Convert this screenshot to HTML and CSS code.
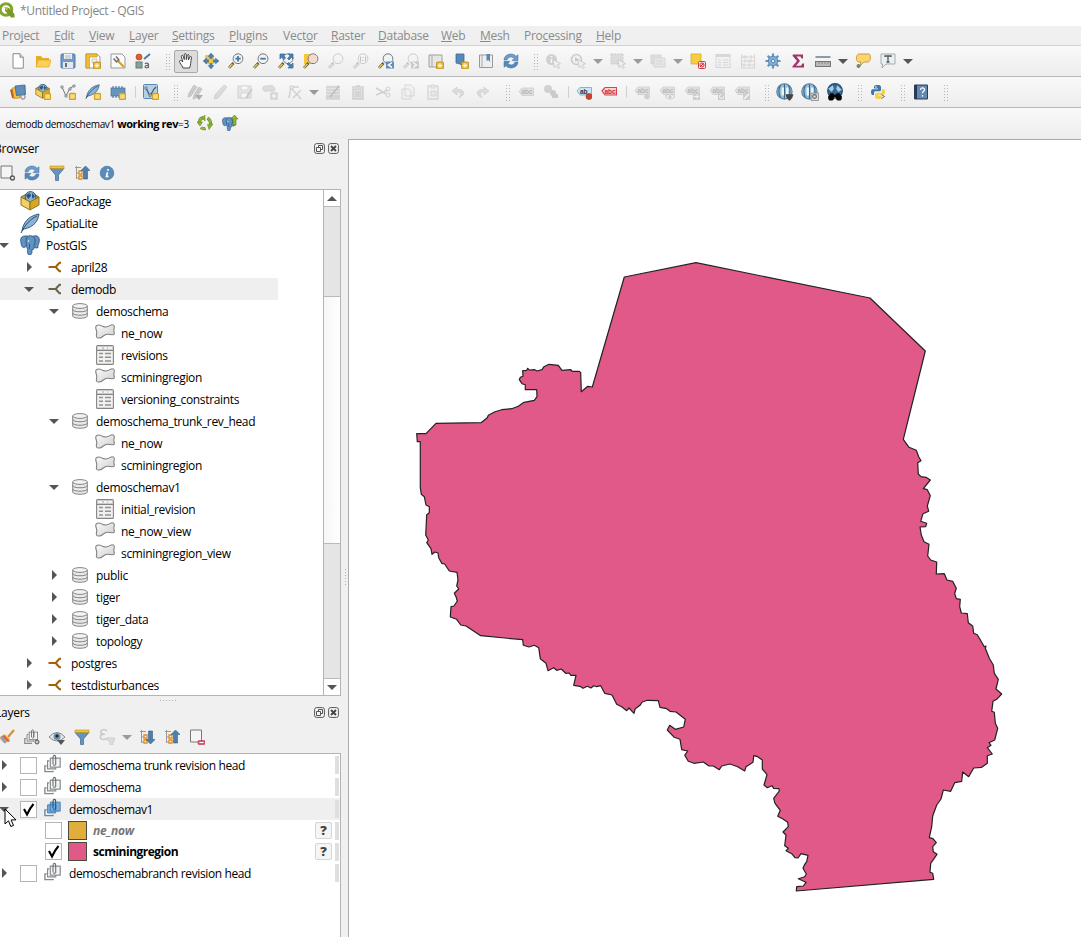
FILE: index.html
```html
<!DOCTYPE html>
<html lang="en">
<head>
<meta charset="utf-8">
<title>*Untitled Project - QGIS</title>
<link rel="stylesheet" href="styles.css">
</head>
<body>
<svg class="defs" aria-hidden="true">
<defs>
<linearGradient id="gr" x1="0" y1="0" x2="1" y2="1"><stop offset="0" stop-color="#fafafa"/><stop offset="1" stop-color="#cfcfcf"/></linearGradient>
<symbol id="badge" viewBox="0 0 16 16"><rect x="9.500" y="9.500" width="6" height="6" rx="1" fill="#f7dc7a" stroke="#d3a021" stroke-width="1.300"/></symbol>
<symbol id="new" viewBox="0 0 16 16"><path d="M3 .7h7l3.300 3.500v11H3z" fill="#fff" stroke="#8b8b8b"/><path d="M10 .7v3.500h3.300" fill="#ddd" stroke="#8b8b8b"/></symbol>
<symbol id="open" viewBox="0 0 16 16"><path d="M1 3h5l1.500 2H14v9H1z" fill="#e7ae27"/><path d="M3 7h13l-2 7H1z" fill="#fcd059" stroke="#dca82c" stroke-width=".7"/></symbol>
<symbol id="save" viewBox="0 0 16 16"><rect x="1" y="1" width="14" height="14" rx="1" fill="#6f9bcb" stroke="#4f7baa"/><path d="M4 1h8v5H4z" fill="#eef2f5"/><path d="M5 3h6M5 5h6" stroke="#aaa" stroke-width=".8"/><path d="M3 9h10v6H3z" fill="#e4e7e9"/><rect x="5" y="10" width="2" height="4" fill="#60707d"/></symbol>
<symbol id="star" viewBox="0 0 16 16"><rect x="8.500" y="9" width="7" height="7" rx="1" fill="#e4b62f" stroke="#ad8517" stroke-width=".7"/><path d="M12 10v5M9.500 12.500h5M10.200 10.700l3.600 3.600M13.800 10.700l-3.600 3.600" stroke="#fff" stroke-width=".8"/></symbol>
<symbol id="layout" viewBox="0 0 16 16"><path d="M1 1h11l3 3v11H1z" fill="#fff" stroke="#999"/><path d="M1 1h11v3H4.500v11H1z" fill="#f1bd36" stroke="#c4962b" stroke-width=".7"/><path d="M7 6h5v4H7z" fill="#f4f4f4" stroke="#aaa" stroke-width=".6"/><use href="#star"/></symbol>
<symbol id="manager" viewBox="0 0 16 16"><path d="M1 1h11l3 3v11H1z" fill="#fafafa" stroke="#999"/><path d="M8 8l6 6" stroke="#d1a22e" stroke-width="2.200"/><path d="M3.500 5.500l3 3.300 2.300-2L6 3.500" fill="none" stroke="#777" stroke-width="1.700"/></symbol>
<symbol id="style" viewBox="0 0 16 16"><circle cx="4" cy="4" r="3" fill="#e0602d" stroke="#a8441c" stroke-width=".7"/><path d="M15 1L9 6" stroke="#4d7ca8" stroke-width="2"/><rect x="1" y="9" width="6" height="6" fill="#85a398" stroke="#5f7c72"/><path d="M10 11c1-1.500 3.500-1 3.500 1v3M13.500 12.500c-5-.5-4 3.500-.5 2" fill="none" stroke="#666" stroke-width="1.200"/></symbol>
<symbol id="hand" viewBox="0 0 16 16"><path d="M5 15c-1-3-3.500-5-3.500-6.500S3.600 7 4.800 9L3.300 3.500c0-1.500 1.500-1.500 2 0l1 3V1.600c0-1.400 1.900-1.400 2 0v5l1-4.300c.5-1.300 2-.8 1.700.6L10.400 7l1.500-3c.7-1 2-.4 1.600.8C12.500 9 13 12 11.500 15z" fill="#fff" stroke="#333" stroke-width=".9"/></symbol>
<symbol id="panto" viewBox="0 0 16 16"><rect x="2" y="2" width="9" height="9" fill="#f5c93d"/><g fill="#4f7fac" stroke="#35618c" stroke-width=".4"><path d="M8 0l3 3.600H9.200v2H6.800v-2H5z"/><path d="M8 16l3-3.600H9.200v-2H6.800v2H5z"/><path d="M0 8l3.600-3v1.800h2v2.400h-2V11z"/><path d="M16 8l-3.600-3v1.800h-2v2.400h2V11z"/></g></symbol>
<symbol id="glass" viewBox="0 0 16 16"><path d="M5.500 10L1 14.800" stroke="#555" stroke-width="2.600"/><path d="M4.500 11L1 14.800" stroke="#e7c83b" stroke-width="1.500"/><circle cx="10" cy="5.700" r="4.900" fill="#eef2f4" fill-opacity=".8" stroke="#777"/></symbol>
<symbol id="zin" viewBox="0 0 16 16"><use href="#glass"/><path d="M10 3v5.400M7.300 5.700h5.400" stroke="#4878a8" stroke-width="1.800"/></symbol>
<symbol id="zout" viewBox="0 0 16 16"><use href="#glass"/><path d="M7.300 5.700h5.400" stroke="#4878a8" stroke-width="1.800"/></symbol>
<symbol id="zfull" viewBox="0 0 16 16"><use href="#glass"/><path d="M2 1h5L5.700 2.500 7.500 5 6 6.500 3.500 4 2 6zM15 1v5l-1.700-1.600L11 7 9.500 5.400 12 3l-1.500-2zM15 15h-5l1.500-1.700L9 11l1.500-1.500L13 12l2-2z" fill="#4f7fac" stroke="#3f6f9c" stroke-width=".8"/></symbol>
<symbol id="zsel" viewBox="0 0 16 16"><rect x="1" y="1" width="9" height="10" fill="#f6c73c"/><use href="#glass"/><circle cx="10" cy="5.700" r="4" fill="#f5d9c8"/></symbol>
<symbol id="znat" viewBox="0 0 16 16"><use href="#glass"/><path d="M7.500 3.500v5M12.500 3.500v5M10 4v1M10 7v1" stroke="#555"/></symbol>
<symbol id="zlast" viewBox="0 0 16 16"><use href="#glass"/><rect x="8" y="8.500" width="8" height="7" fill="#608db9"/><path d="M14 9.500L10.500 12l3.500 2.300" fill="none" stroke="#fff" stroke-width="1.500"/></symbol>
<symbol id="znext" viewBox="0 0 16 16"><use href="#glass"/><rect x="8" y="8.500" width="8" height="7" fill="#777"/><path d="M10 9.500l3.500 2.500-3.500 2.300" fill="none" stroke="#fff" stroke-width="1.500"/></symbol>
<symbol id="mapview" viewBox="0 0 16 16"><path d="M1 2h13v12H1z" fill="#e6e6e3" stroke="#a0a09d"/><path d="M4 2v12" stroke="#aaa"/><use href="#star"/></symbol>
<symbol id="bookmark" viewBox="0 0 16 16"><path d="M3 1h8v13l-4-3-4-1z" fill="#5988b5" stroke="#3c6b99" stroke-width=".8"/><use href="#star"/></symbol>
<symbol id="bookmarks" viewBox="0 0 16 16"><path d="M1.500 2h13v12.500h-13z" fill="#eee" stroke="#999"/><path d="M4 2v12" stroke="#aaa"/><path d="M8.500 1h3.500v8l-1.700-2L8.500 8z" fill="#5988b5"/></symbol>
<symbol id="refresh" viewBox="0 0 16 16"><path d="M1 7c0-6 9-8 12-3.700l2-1.600v6H9l2-2.200C8.500 3 5 4 4 7z" fill="#6b9ccb" stroke="#3f709f" stroke-width=".5"/><path d="M15 9c0 6-9 8-12 3.700l-2 1.600v-6h6l-2 2.200c2.500 2.500 6 1.500 7-1.500z" fill="#5488b8" stroke="#3f709f" stroke-width=".5"/></symbol>
<symbol id="info" viewBox="0 0 16 16"><circle cx="8" cy="8" r="6.800" fill="#5b8bb9" stroke="#44749f" stroke-width=".7"/><path d="M9 4v1.700M8.500 7.200L7.500 11.500h2" fill="none" stroke="#fff" stroke-width="1.700"/></symbol>
<symbol id="cursorpart" viewBox="0 0 16 16"><path d="M8 6.500l7.500 4.200-3 .8 2 3-1.700 1-2-3-1.800 2z" fill="#eee" stroke="#666" stroke-width=".8"/></symbol>
<symbol id="identify" viewBox="0 0 16 16"><circle cx="6.500" cy="6.500" r="5.500" fill="#888"/><path d="M6.500 3v1.500M6.500 6v4" stroke="#fff" stroke-width="1.700"/><use href="#cursorpart"/></symbol>
<symbol id="action" viewBox="0 0 16 16"><circle cx="6.500" cy="6.500" r="5" fill="#eee" stroke="#777" stroke-width="1.600"/><path d="M5 4l4 2.500L5 9z" fill="#777"/><use href="#cursorpart"/></symbol>
<symbol id="select" viewBox="0 0 16 16"><rect x="1" y="1" width="12" height="10" fill="#aaa" stroke="#777" stroke-dasharray="2 1"/><use href="#cursorpart"/></symbol>
<symbol id="forms" viewBox="0 0 16 16"><path d="M1 2h10v9H1z" fill="#aaa" stroke="#999"/><path d="M4 5h11v9H4z" fill="#ccc" stroke="#999"/><path d="M6 8h7M6 11h7" stroke="#999"/></symbol>
<symbol id="deselect" viewBox="0 0 16 16"><path d="M1 1h10v10H1z" fill="#f6cf3f" stroke="#d3a52a" stroke-width=".7"/><rect x="8.500" y="8.500" width="7" height="7" rx="1" fill="#f9dddd" stroke="#cf3c46"/><circle cx="12" cy="12" r="2" fill="none" stroke="#cf3c46"/><path d="M10 14l4-4" stroke="#cf3c46"/></symbol>
<symbol id="tbl" viewBox="0 0 16 16"><rect x="1" y="1.500" width="14" height="13" fill="#eee" stroke="#999"/><path d="M1 3h14" stroke="#999" stroke-width="2"/><path d="M3 7h3M3 9.500h3M3 12h3M8 7h5M8 9.500h5M8 12h5" stroke="#999" stroke-width="1.200"/></symbol>
<symbol id="abacus" viewBox="0 0 16 16"><path d="M1.500 1v14M14.500 1v14M1 4h14M1 8h14M1 12h14M1 15h14" stroke="#999"/><path d="M4 2.500v3M6 2.500v3M11 2.500v3M5 6.500v3M9 6.500v3M11 6.500v3M4 10.500v3M9 10.500v3" stroke="#999" stroke-width="1.500"/></symbol>
<symbol id="gear" viewBox="0 0 16 16"><path d="M8 .5v15M.5 8h15M2.700 2.700l10.600 10.600M13.300 2.700L2.700 13.300" stroke="#5f92c3" stroke-width="2.200"/><circle cx="8" cy="8" r="4.800" fill="#83add4" stroke="#5989b8"/><circle cx="8" cy="8" r="1.700" fill="#eee" stroke="#5989b8"/></symbol>
<symbol id="sum" viewBox="0 0 16 16"><path d="M3 1.500h10v4h-1.500L10.500 3.500H6.500L10 8l-4 4.700h5l1.500-2.200H14v4H2.500v-1.300L7 8 2.500 2.700z" fill="#a33267"/></symbol>
<symbol id="ruler" viewBox="0 0 16 16"><path d="M.5 4h15" stroke="#667f94" stroke-width="1.500"/><rect x=".5" y="8.500" width="15" height="5" fill="#bbb" stroke="#777"/><path d="M4 9v2M7 9v2M10 9v2M13 9v2" stroke="#777" stroke-width=".7"/></symbol>
<symbol id="tip" viewBox="0 0 16 16"><path d="M4 1h10c2 0 2 8-1 8H9l-4 4 1-4H4C0 9 1 1 4 1z" fill="#fbd670" stroke="#d09a38"/><circle cx="3.500" cy="13" r="2" fill="#747f76"/></symbol>
<symbol id="note" viewBox="0 0 16 16"><path d="M1 1h14v10H6l-4 4 .5-4H1z" fill="#eaf0f2" stroke="#a4acae"/><path d="M5 4V3h6v1M8 3v6M6.500 9h3" fill="none" stroke="#555" stroke-width="1.300"/></symbol>
<symbol id="dsm" viewBox="0 0 16 16"><path d="M.5 6l7-2v9l-5 1z" fill="#d94c30" stroke="#9b3622" stroke-width=".6"/><path d="M2 4l7-1 1 11-6 .5z" fill="#f4bd39" stroke="#af8220" stroke-width=".6"/><path d="M5 2l10-1 .5 9.500-9 1z" fill="#5e8eba" stroke="#376691" stroke-width=".8"/><circle cx="13" cy="13" r="2.200" fill="#eee" stroke="#777"/></symbol>
<symbol id="geopkg" viewBox="0 0 20 20"><path d="M1 6l9-5 9 5-9 4.500z" fill="#bfae62" stroke="#7e6b2d"/><circle cx="10.500" cy="6" r="5.400" fill="#8fb1cc" stroke="#2e587f"/><path d="M6 4l4-2 1 3-3 3zM12 2l3 3-2 3-1-2z" fill="#2c537a"/><path d="M1 6l9 5v8l-9-5z" fill="#f3d15c" stroke="#8d7328"/><path d="M19 6l-9 5v8l9-5z" fill="#d8a920" stroke="#8d7328"/></symbol>
<symbol id="gpnew" viewBox="0 0 16 16"><use href="#geopkg" width="15" height="15"/><use href="#badge"/></symbol>
<symbol id="shpnew" viewBox="0 0 16 16"><path d="M2 3l4 9 4-8 4-2" fill="none" stroke="#6f7474"/><path d="M1 2h2v2H1zM5 11h2v2H5zM9 4h2v2H9zM13 1h2v2h-2z" fill="#fff" stroke="#65757c" stroke-width=".8"/><use href="#badge"/></symbol>
<symbol id="feather" viewBox="0 0 20 20"><path d="M2 18C3 10 8 3 19 1c-1 7-5 13-15 15z" fill="#8db2d7" stroke="#375c7c"/><path d="M1 20C5 12 9 7 17 3" fill="none" stroke="#254c70"/></symbol>
<symbol id="splnew" viewBox="0 0 16 16"><use href="#feather" width="15" height="15"/><use href="#badge"/></symbol>
<symbol id="memnew" viewBox="0 0 16 16"><path d="M3 2v12M6 2v12M9 2v12M12 2v12" stroke="#5580a8" stroke-width="1.200"/><rect x="1" y="4" width="14" height="8" fill="#6794bf" stroke="#426e99" stroke-width=".7"/><use href="#badge"/></symbol>
<symbol id="virtual" viewBox="0 0 16 16"><rect x=".5" y=".5" width="14" height="14" rx="1" fill="#b4cfe6" stroke="#5688b4"/><path d="M3 4l4 8 4-7 2-2" fill="none" stroke="#3e5669" stroke-width="1.200"/><path d="M2 3h2v2H2zM6 10h2v2H6z" fill="#fff" stroke="#3e5669" stroke-width=".7"/><use href="#badge"/></symbol>
<symbol id="pencil" viewBox="0 0 16 16"><path d="M12 1l3 2-9 11-4 1 1-4z" fill="#aaa" stroke="#888"/></symbol>
<symbol id="pencils" viewBox="0 0 16 16"><path d="M7 1l3 2-6 9-3 1 1-4zM12 3l3 2-6 9-3 1 1-4z" fill="#777" stroke="#666"/><path d="M8 11h8l-4 5z" fill="#222"/></symbol>
<symbol id="savee" viewBox="0 0 16 16"><path d="M1 2h13v12H1z" fill="#ccc" stroke="#888"/><path d="M4 2h7v4H4zM4 9h7v5H4z" fill="#fff" stroke="#999"/><path d="M15 5l-6 9" stroke="#777" stroke-width="2"/></symbol>
<symbol id="poly" viewBox="0 0 16 16"><path d="M2 2c4 1 6-2 9 0 4 3 1 7-2 5-3-1-5 1-7 0-2-2-1-4 0-5z" fill="#aaa" stroke="#888"/><rect x="9" y="9" width="6" height="6" fill="#bbb" stroke="#777"/><path d="M12 10v4M10 12h4" stroke="#fff"/></symbol>
<symbol id="vertex" viewBox="0 0 16 16"><path d="M2 14L4 3h8M5 5l9 10M14 6L6 14" fill="none" stroke="#888" stroke-width="1.400"/><path d="M3 2h3v3H3z" stroke="#777" fill="#fff"/></symbol>
<symbol id="multi" viewBox="0 0 16 16"><path d="M1 3h14M1 6h14M1 9h14M1 12h14M1 14.500h14" stroke="#999" stroke-width="2.300"/><path d="M14 2L5 13" stroke="#555" stroke-width="1.700"/></symbol>
<symbol id="trash" viewBox="0 0 16 16"><path d="M2 3h12M6 2h4M3 5h10v10H3z" fill="#bbb" stroke="#888" stroke-width="1.500"/><path d="M6 7v6M8 7v6M10 7v6" stroke="#777"/></symbol>
<symbol id="cut" viewBox="0 0 16 16"><path d="M1 4l10 6M1 11l12-5" stroke="#888" stroke-width="1.500"/><circle cx="13" cy="11" r="2" fill="none" stroke="#888"/><circle cx="13" cy="5" r="2" fill="none" stroke="#888"/></symbol>
<symbol id="copy" viewBox="0 0 16 16"><path d="M5 1h6l3 3v8H5zM2 5h7l2 2v8H2z" fill="#eee" stroke="#999"/></symbol>
<symbol id="paste" viewBox="0 0 16 16"><path d="M3 2h10v13H3z" fill="#eee" stroke="#999" stroke-width="1.400"/><path d="M6 1h4v3H6zM6 7h5v5H6z" fill="#ccc" stroke="#999"/></symbol>
<symbol id="undo" viewBox="0 0 16 16"><path d="M7 3L2 7l5 4V8.500c3-1.500 5 1 2 5 7-2 6-9-2-8z" fill="#aaa" stroke="#888" stroke-width=".8"/></symbol>
<symbol id="abc" viewBox="0 0 16 16"><path d="M1 7.500L4 4h11.500v7.500H4z" fill="#bbb" stroke="#888" stroke-width=".9"/><text x="3.500" y="10" font-family="Liberation Sans" font-size="6.500" font-weight="bold" fill="#333">abc</text></symbol>
<symbol id="abcblue" viewBox="0 0 16 16"><path d="M1 7L4 3.500h11.500V11H4z" fill="#c9e7f8" stroke="#66b2df" stroke-width=".9"/><text x="4" y="9.500" font-family="Liberation Sans" font-size="6.500" font-weight="bold" fill="#333">ab</text><circle cx="13" cy="12.500" r="3" fill="#c8442d" stroke="#9a3021" stroke-width=".6"/></symbol>
<symbol id="abcred" viewBox="0 0 16 16"><path d="M1 7L4 3.500h11.500V11H4z" fill="#fad5dc" stroke="#dc4058" stroke-width="1.200"/><text x="3.500" y="9.500" font-family="Liberation Sans" font-size="6.500" font-weight="bold" fill="#b92540">abc</text></symbol>
<symbol id="abcpin" viewBox="0 0 16 16"><use href="#abc" y="-1"/><circle cx="13" cy="12.500" r="2.800" fill="#888"/></symbol>
<symbol id="abceye" viewBox="0 0 16 16"><use href="#abc" y="-1"/><path d="M6 12.500q5-5 10 0-5 5-10 0z" fill="#eee" stroke="#777"/><circle cx="11" cy="12.500" r="1.500" fill="#777"/></symbol>
<symbol id="abcmove" viewBox="0 0 16 16"><use href="#abc" y="-1"/><rect x="9" y="9" width="7" height="7" fill="#888"/><path d="M10 12.500h4M12.500 10.500l2 2-2 2" stroke="#fff" fill="none"/></symbol>
<symbol id="abcrot" viewBox="0 0 16 16"><use href="#abc" y="-1"/><rect x="9" y="9" width="7" height="7" fill="#888"/><circle cx="12.500" cy="12.500" r="2" stroke="#fff" fill="none" stroke-dasharray="8 3"/></symbol>
<symbol id="abcedit" viewBox="0 0 16 16"><use href="#abc" y="-1"/><rect x="9" y="9" width="7" height="7" fill="#888"/><path d="M10 15l5-5" stroke="#fff" stroke-width="1.500"/></symbol>
<symbol id="diag" viewBox="0 0 16 16"><circle cx="5" cy="5" r="4" fill="#888"/><path d="M9 7v7h6v-4h-3V7z" fill="#777"/><circle cx="10" cy="9" r="3" fill="#777"/></symbol>
<symbol id="globe" viewBox="0 0 16 16"><circle cx="7.500" cy="7.500" r="6.800" fill="#93bddc" stroke="#597f9c"/><path d="M4 2q-3 5 0 11M11 2q3 5 0 11M7.500 1v13" stroke="#3f6788" fill="none"/><path d="M5 4h2v7H5zM9 4h2v6H9z" fill="#f2f7f9"/></symbol>
<symbol id="globe1" viewBox="0 0 16 16"><use href="#globe"/><path d="M8.500 10h7l-1 3-2 2.500h-1l-2-2.500z" fill="#444"/></symbol>
<symbol id="globe2" viewBox="0 0 16 16"><use href="#globe"/><rect x="9" y="9" width="6.500" height="6.500" fill="#ddd" stroke="#888" stroke-width=".7"/><circle cx="12" cy="12" r="1.700" fill="none" stroke="#666"/></symbol>
<symbol id="globe3" viewBox="0 0 16 16"><circle cx="8" cy="7" r="6.500" fill="#356894" stroke="#254a69"/><path d="M2 5l4-3 1 3-2 3zM10 2l4 4-3 2-2-3z" fill="#a9cce5"/><path d="M4 9h2.500l1 1.500h1l1-1.500H12l2 3.500H2z" fill="#050505"/><circle cx="4.500" cy="13" r="2.600" fill="#050505"/><circle cx="11.500" cy="13" r="2.600" fill="#050505"/></symbol>
<symbol id="python" viewBox="0 0 16 16"><path d="M7.500 1C4 1 4 2 4 4.500h4v.8H2.500C.5 5.300.5 11 2.500 11H4V8.800c0-1 .8-1.500 1.600-1.500h4C10.500 7.300 11 6.500 11 6V3c0-1.500-1.200-2-3.500-2z" fill="#3e76aa"/><path d="M8.500 15c3.500 0 3.500-1 3.500-3.500H8v-.8h5.500c2 0 2-5.700 0-5.700H12v2.200c0 1-.8 1.500-1.600 1.500h-4C5.500 8.700 5 9.500 5 10v3c0 1.500 1.200 2 3.500 2z" fill="#f8d245"/><path d="M11.500 10.500l3 2-3 2" fill="none" stroke="#666"/><circle cx="6" cy="3" r=".8" fill="#fff"/></symbol>
<symbol id="help" viewBox="0 0 16 16"><path d="M1.500 1h13v14h-13z" fill="#6389b3" stroke="#2a3f59"/><path d="M2 1h2v14H2z" fill="#263a53"/><path d="M7.500 6c0-3 4-2.500 4-.3 0 1.700-2 1.500-2 3.500M9.500 11v1.500" stroke="#fff" stroke-width="1.300" fill="none"/></symbol>
<symbol id="recycle" viewBox="0 0 16 16"><g fill="none" stroke="#5a7d1c" stroke-width="3"><path d="M6 2.500Q2 4 2.500 8M4 12.500q2 2 4.500 1M13.500 9.500q.5-4-3-6.500"/></g><g fill="none" stroke="#94b738" stroke-width="2"><path d="M6 2.500Q2 4 2.500 8M4 12.500q2 2 4.500 1M13.500 9.500q.5-4-3-6.500"/></g><path d="M0 7h5.500L3 11zM8 0v6L5 3zM10.500 9.500l5.500-.5-4 5.500z" fill="#8cb233" stroke="#5a7d1c" stroke-width=".5"/></symbol>
<symbol id="elephant" viewBox="0 0 20 20"><path d="M5 1C1 1 0 4 1 8c.5 3 1.500 5 3 4.500l2-1c1 1 1.500 2 1.500 4 0 3 .5 4.500 2 4.500 2.500 0 2.500-2 2.500-5.500 2 .5 2-1 2-2l3 .5c1-.5 2-1 .5-1.500C20 7 20 2 17 1c-2-.6-3 0-4 .3C11 .5 9 .7 8 1.200 7 1 6 .8 5 1z" fill="#5f93c4" stroke="#274d72" stroke-width=".8"/><path d="M8 1.500C5.500 3 6 7 6.500 11M13 1.500c2.500 2 3 6 .5 10M9.500 9v5" fill="none" stroke="#274d72" stroke-width=".8"/><circle cx="8.500" cy="6" r=".8" fill="#fff"/></symbol>
<symbol id="elup" viewBox="0 0 16 16"><use href="#elephant" y="2" width="14" height="14"/><path d="M12.500 0L16 4h-2v6h-3V4H9z" fill="#91b731" stroke="#557b18" stroke-width=".6"/></symbol>
<symbol id="addlayer" viewBox="0 0 16 16"><path d="M2 1h11v12H2z" fill="#f5f5f5" stroke="#777"/><circle cx="13.500" cy="13" r="2" fill="#eee" stroke="#555" stroke-width="1.300"/></symbol>
<symbol id="filter" viewBox="0 0 16 16"><path d="M1 3.500h14L9.500 10v5.500H6.500V10z" fill="#6592be" stroke="#3f6c98" stroke-width=".7"/><path d="M1 1h14v2.500H1z" fill="#f2c338" stroke="#b99224" stroke-width=".6"/></symbol>
<symbol id="collapse" viewBox="0 0 16 16"><path d="M1 2.500h6M2.500 1v13M3 8h4M3 13h5" stroke="#999" fill="none"/><path d="M5 6h3v3H5zM5 11h3v3H5z" fill="#fff" stroke="#e08b22" stroke-width="1.300"/><path d="M11.500 1l4.500 4.500h-2.500V14h-4V5.500H7z" fill="#4e7eab" stroke="#315f8a" stroke-width=".6"/></symbol>
<symbol id="expand" viewBox="0 0 16 16"><path d="M1 2.500h6M2.500 1v13M3 8h4M3 13h5" stroke="#999" fill="none"/><path d="M5 6h3v3H5zM5 11h3v3H5z" fill="#fff" stroke="#e08b22" stroke-width="1.300"/><path d="M11.500 15l4.500-4.500h-2.500V2h-4v8.500H7z" fill="#4e7eab" stroke="#315f8a" stroke-width=".6"/></symbol>
<symbol id="brush" viewBox="0 0 16 16"><path d="M15 1L9 8" stroke="#d2913b" stroke-width="2.200"/><path d="M0 9l6-4 5 5-5 5z" fill="#f5bd49"/><path d="M5 6l6 6-2 1-6-6z" fill="#e05451"/><path d="M1 8l2-1 5 6-3 1z" fill="#77a4ce"/></symbol>
<symbol id="layergroup" viewBox="0 0 20 20"><path d="M3 12H1v6.500h9v-1" fill="none" stroke="#838a89" stroke-width="1.500"/><path d="M6 6.500H4v9h9v-2" fill="none" stroke="#838a89" stroke-width="1.300"/><rect x="7" y="3.500" width="11" height="10" fill="#f4f4f2" stroke="#838a89" stroke-width="1.300"/><path d="M13 4v6.500M10 10V3c0-3.500 3-3.500 3 0v7.500q-1.500 2-3 0" fill="none" stroke="#5f7182" stroke-width="1.200"/></symbol>
<symbol id="activegroup" viewBox="0 0 20 20"><path d="M3 12H1v6.500h9v-1" fill="none" stroke="#628baf" stroke-width="1.500"/><path d="M4 6.500h9v9H4zM7 3.500h11v10H7z" fill="#73aee0" stroke="#447ba9"/><path d="M10 10V3c0-3.500 3-3.500 3 0v7.500q-1.500 2-3 0" fill="none" stroke="#28577d" stroke-width="1.200"/></symbol>
<symbol id="addgroup" viewBox="0 0 16 16"><use href="#layergroup" width="15" height="16"/><circle cx="13" cy="13" r="2" fill="#ccc" stroke="#555"/></symbol>
<symbol id="eye" viewBox="0 0 16 16"><path d="M0 8q8-9 16 0-8 8-16 0z" fill="#dfe9ef" stroke="#888"/><circle cx="8" cy="7.500" r="3.500" fill="#6f8fae"/><circle cx="8" cy="7" r="1.500" fill="#222"/><path d="M8 11h8l-4 5z" fill="#555"/></symbol>
<symbol id="eps" viewBox="0 0 16 16"><path d="M8 2C5-1 1 1 2 4c.3 1 2 1.300 4 1.300C2 5.300 1 6.500 1.500 9c1 2 5 2 7 0" fill="none" stroke="#777" stroke-width="1.600"/><path d="M8 9h8v2l-2 1v4h-3v-4l-3-1z" fill="#bbb" stroke="#888"/></symbol>
<symbol id="remove" viewBox="0 0 16 16"><path d="M1.500 1h11v12h-11z" fill="#f5f5f5" stroke="#777"/><rect x="9" y="11.500" width="7" height="4" rx="1" fill="#e25375" stroke="#bd3455" stroke-width=".6"/><path d="M10.500 13.500h4" stroke="#fff"/></symbol>
<symbol id="conn" viewBox="0 0 14 12"><path d="M.5 6H8M13 1.800h-1.500L8.500 5v2l3 3.200H13" fill="none" stroke="currentColor" stroke-width="2"/></symbol>
<symbol id="schema" viewBox="0 0 16 16"><path d="M.7 3v10c0 3 14.600 3 14.600 0V3" fill="#e9e9e7" stroke="#858585"/><ellipse cx="8" cy="3" rx="7.300" ry="2.400" fill="#f3f3f2" stroke="#858585"/><path d="M.7 6.500c0 3 14.600 3 14.600 0M.7 10c0 3 14.600 3 14.600 0" fill="none" stroke="#858585"/></symbol>
<symbol id="region" viewBox="0 0 20 15"><path d="M1 5C0 2 2 .6 5 1.200c3 .8 4 2.300 7 1.600 3-.7 3-2 5.500-2 2 0 2 2 1.500 4-.5 1.500.3 3 .3 5 0 1.200-2 1.200-4 .7-3-.7-5-.5-7 1.500-2 1.800-4 2.500-6 1.700C.7 13 1.500 11 1.700 9.500 1.900 8 1.500 6.500 1 5z" fill="url(#gr)" stroke="#828282" stroke-width="1.100"/></symbol>
<symbol id="sheet" viewBox="0 0 18 20"><rect x=".6" y=".6" width="16.800" height="18.800" rx="1" fill="#f0f0ee" stroke="#858585" stroke-width="1.100"/><path d="M1 1h16v4H1z" fill="#ccc"/><path d="M1 5.500h16" stroke="#858585"/><path d="M2 3h4M8 3h3M12 3h4" stroke="#fff" stroke-width="1.500"/><path d="M3 8.500h4M3 12.200h4M3 16h4M9 8.500h6M9 12.200h6M9 16h6" stroke="#929292" stroke-width="1.500"/></symbol>
<symbol id="check" viewBox="0 0 15 15"><path d="M3 7l3 5.500Q9 6 12.500 2" fill="none" stroke="#000" stroke-width="2.100"/></symbol>
<symbol id="float" viewBox="0 0 11 11"><rect x=".6" y=".6" width="9.800" height="9.800" rx="2" fill="#f6f6f6" stroke="#555"/><path d="M4.500 4V2.500h4v4H7M2.500 4.500h4v4h-4z" fill="none" stroke="#555"/></symbol>
<symbol id="close" viewBox="0 0 11 11"><rect x=".6" y=".6" width="9.800" height="9.800" rx="2" fill="#f6f6f6" stroke="#555"/><path d="M3 3l5 5M8 3L3 8" stroke="#444" stroke-width="1.900"/></symbol>
</defs>
</svg>

<div class="app">
<header class="titlebar">
<svg class="logo" viewBox="0 0 16 16"><circle cx="7" cy="7.500" r="5.800" fill="#fff" stroke="#83a62f" stroke-width="3"/><path d="M6 6h4l5.500 6v3.500H12L6 9z" fill="#779b2b"/><path d="M5 5h4L8 9z" fill="#eeb544"/></svg>
<span class="title">*Untitled Project - QGIS</span>
</header>
<nav class="menubar">
<span class="m52">Pro<u>j</u>ect</span><span class="m35"><u>E</u>dit</span><span class="m40"><u>V</u>iew</span><span class="m43"><u>L</u>ayer</span><span class="m57"><u>S</u>ettings</span><span class="m54"><u>P</u>lugins</span><span class="m48">Vect<u>o</u>r</span><span class="m47"><u>R</u>aster</span><span class="m63"><u>D</u>atabase</span><span class="m39"><u>W</u>eb</span><span class="m44"><u>M</u>esh</span><span class="m72">Pro<u>c</u>essing</span><span><u>H</u>elp</span>
</nav>

<div class="toolbar">
<b class="grip edge"></b>
<i><svg><use href="#new"/></svg></i><i><svg><use href="#open"/></svg></i><i><svg><use href="#save"/></svg></i><i><svg><use href="#layout"/></svg></i><i><svg><use href="#manager"/></svg></i><i><svg><use href="#style"/></svg></i>
<b class="grip"></b>
<i class="pressed"><svg><use href="#hand"/></svg></i><i><svg><use href="#panto"/></svg></i><i><svg><use href="#zin"/></svg></i><i><svg><use href="#zout"/></svg></i><i><svg><use href="#zfull"/></svg></i><i><svg><use href="#zsel"/></svg></i><i class="off"><svg><use href="#glass"/></svg></i><i class="off"><svg><use href="#znat"/></svg></i><i><svg><use href="#zlast"/></svg></i><i class="off"><svg><use href="#znext"/></svg></i><i><svg><use href="#mapview"/></svg></i><i><svg><use href="#bookmark"/></svg></i><i><svg><use href="#bookmarks"/></svg></i><i><svg><use href="#refresh"/></svg></i>
<b class="grip narrow"></b>
<i class="off"><svg><use href="#identify"/></svg></i><i class="off"><svg><use href="#action"/></svg></i><b class="drop dim"></b><i class="off"><svg><use href="#select"/></svg></i><b class="drop dim"></b><i class="off"><svg><use href="#forms"/></svg></i><b class="drop dim"></b><i><svg><use href="#deselect"/></svg></i><i class="off"><svg><use href="#tbl"/></svg></i><i class="off"><svg><use href="#abacus"/></svg></i><i><svg><use href="#gear"/></svg></i><i><svg><use href="#sum"/></svg></i><i><svg><use href="#ruler"/></svg></i><b class="drop"></b><i><svg><use href="#tip"/></svg></i><i><svg><use href="#note"/></svg></i><b class="drop"></b>
</div>

<div class="toolbar">
<b class="grip edge"></b>
<i><svg><use href="#dsm"/></svg></i><i><svg><use href="#gpnew"/></svg></i><i><svg><use href="#shpnew"/></svg></i><i><svg><use href="#splnew"/></svg></i><i><svg><use href="#memnew"/></svg></i><b class="sep"></b><i><svg><use href="#virtual"/></svg></i>
<b class="grip wide"></b>
<i class="off"><svg><use href="#pencils"/></svg></i><i class="off"><svg><use href="#pencil"/></svg></i><i class="off"><svg><use href="#savee"/></svg></i><i class="off"><svg><use href="#poly"/></svg></i><i class="off"><svg><use href="#vertex"/></svg></i><b class="drop tight dim"></b><i class="off"><svg><use href="#multi"/></svg></i><i class="off"><svg><use href="#trash"/></svg></i><i class="off"><svg><use href="#cut"/></svg></i><i class="off"><svg><use href="#copy"/></svg></i><i class="off"><svg><use href="#paste"/></svg></i><i class="off"><svg><use href="#undo"/></svg></i><i class="off flip"><svg><use href="#undo"/></svg></i>
<b class="grip"></b>
<i class="off"><svg><use href="#abc"/></svg></i><i class="off"><svg><use href="#diag"/></svg></i><b class="sep"></b><i><svg><use href="#abcblue"/></svg></i><i><svg><use href="#abcred"/></svg></i><b class="sep"></b><i class="off"><svg><use href="#abcpin"/></svg></i><i class="off"><svg><use href="#abceye"/></svg></i><i class="off"><svg><use href="#abcmove"/></svg></i><i class="off"><svg><use href="#abcrot"/></svg></i><i class="off"><svg><use href="#abcedit"/></svg></i>
<b class="grip"></b>
<i><svg class="big"><use href="#globe1"/></svg></i><i><svg class="big"><use href="#globe2"/></svg></i><i><svg class="big"><use href="#globe3"/></svg></i>
<b class="grip"></b>
<i><svg><use href="#python"/></svg></i>
<b class="grip"></b>
<i><svg><use href="#help"/></svg></i>
<b class="grip"></b>
</div>

<div class="toolbar versioning">
<b class="grip edge"></b>
<span class="vtext">demodb demoschemav1 <strong>working rev</strong>=3</span>
<i><svg><use href="#recycle"/></svg></i><i><svg><use href="#elup"/></svg></i>
</div>

<main class="work">
<aside class="docks">
<section class="dock browser">
<div class="dockhead"><span class="browser-title">Browser</span><svg><use href="#float"/></svg><svg><use href="#close"/></svg></div>
<div class="docktools"><i><svg><use href="#addlayer"/></svg></i><i><svg><use href="#refresh"/></svg></i><i><svg><use href="#filter"/></svg></i><i><svg><use href="#collapse"/></svg></i><i><svg><use href="#info"/></svg></i></div>
<div class="treebox">
<div class="tree">
<div class="row l0"><b></b><i><svg class="s20"><use href="#geopkg"/></svg></i><span>GeoPackage</span></div>
<div class="row l0"><b></b><i><svg class="s20"><use href="#feather"/></svg></i><span>SpatiaLite</span></div>
<div class="row l0"><b class="down"></b><i><svg class="s20"><use href="#elephant"/></svg></i><span>PostGIS</span></div>
<div class="row l1"><b class="right"></b><i class="orange"><svg class="conn"><use href="#conn"/></svg></i><span>april28</span></div>
<div class="row l1 current"><b class="down"></b><i class="olive"><svg class="conn"><use href="#conn"/></svg></i><span>demodb</span></div>
<div class="row l2"><b class="down"></b><i><svg><use href="#schema"/></svg></i><span>demoschema</span></div>
<div class="row l3"><b></b><i><svg class="region"><use href="#region"/></svg></i><span>ne_now</span></div>
<div class="row l3"><b></b><i><svg class="sheet"><use href="#sheet"/></svg></i><span>revisions</span></div>
<div class="row l3"><b></b><i><svg class="region"><use href="#region"/></svg></i><span>scminingregion</span></div>
<div class="row l3"><b></b><i><svg class="sheet"><use href="#sheet"/></svg></i><span>versioning_constraints</span></div>
<div class="row l2"><b class="down"></b><i><svg><use href="#schema"/></svg></i><span>demoschema_trunk_rev_head</span></div>
<div class="row l3"><b></b><i><svg class="region"><use href="#region"/></svg></i><span>ne_now</span></div>
<div class="row l3"><b></b><i><svg class="region"><use href="#region"/></svg></i><span>scminingregion</span></div>
<div class="row l2"><b class="down"></b><i><svg><use href="#schema"/></svg></i><span>demoschemav1</span></div>
<div class="row l3"><b></b><i><svg class="sheet"><use href="#sheet"/></svg></i><span>initial_revision</span></div>
<div class="row l3"><b></b><i><svg class="region"><use href="#region"/></svg></i><span>ne_now_view</span></div>
<div class="row l3"><b></b><i><svg class="region"><use href="#region"/></svg></i><span>scminingregion_view</span></div>
<div class="row l2"><b class="right"></b><i><svg><use href="#schema"/></svg></i><span>public</span></div>
<div class="row l2"><b class="right"></b><i><svg><use href="#schema"/></svg></i><span>tiger</span></div>
<div class="row l2"><b class="right"></b><i><svg><use href="#schema"/></svg></i><span>tiger_data</span></div>
<div class="row l2"><b class="right"></b><i><svg><use href="#schema"/></svg></i><span>topology</span></div>
<div class="row l1"><b class="right"></b><i class="orange"><svg class="conn"><use href="#conn"/></svg></i><span>postgres</span></div>
<div class="row l1"><b class="right"></b><i class="orange"><svg class="conn"><use href="#conn"/></svg></i><span>testdisturbances</span></div>
</div>
<div class="scrollbar"><div class="sbtn"><b class="up"></b></div><div class="strack"></div><div class="sthumb"></div><div class="strack grow"></div><div class="sbtn"><b class="dn"></b></div></div>
</div>
</section>
<div class="hsplit"></div>
<section class="dock layers">
<div class="dockhead"><span class="layers-title">Layers</span><svg><use href="#float"/></svg><svg><use href="#close"/></svg></div>
<div class="docktools"><i><svg><use href="#brush"/></svg></i><i><svg><use href="#addgroup"/></svg></i><i><svg><use href="#eye"/></svg></i><i><svg><use href="#filter"/></svg></i><i class="off"><svg><use href="#eps"/></svg></i><b class="drop dim"></b><i><svg><use href="#expand"/></svg></i><i><svg><use href="#collapse"/></svg></i><i><svg><use href="#remove"/></svg></i></div>
<div class="layerlist">
<div class="lrow"><b class="right"></b><em></em><i><svg class="s18"><use href="#layergroup"/></svg></i><span>demoschema trunk revision head</span><s></s></div>
<div class="lrow"><b class="right"></b><em></em><i><svg class="s18"><use href="#layergroup"/></svg></i><span>demoschema</span><s></s></div>
<div class="lrow current"><b class="down"></b><em><svg><use href="#check"/></svg></em><i><svg class="s18"><use href="#activegroup"/></svg></i><span>demoschemav1</span><s></s></div>
<div class="lrow child"><em></em><i class="swatch gold"></i><span class="hiddenlayer">ne_now</span><q>?</q><s></s></div>
<div class="lrow child"><em><svg><use href="#check"/></svg></em><i class="swatch pink"></i><span class="shown">scminingregion</span><q>?</q><s></s></div>
<div class="lrow"><b class="right"></b><em></em><i><svg class="s18"><use href="#layergroup"/></svg></i><span>demoschemabranch revision head</span><s></s></div>
<svg class="cursor" viewBox="0 0 13 20"><path d="M1 1v15l3.500-3.200 2.300 5.700 2.700-1.100-2.400-5.500H12z" fill="#fff" stroke="#000"/></svg>
</div>
</section>
</aside>
<div class="vsplit"><b></b></div>
<section class="canvas">
<svg class="map" viewBox="349 140 732 797"><path d="M416.700 433.700H426L436 423.300 481 422.700 487.300 417.700 488.300 415.300 495 411.700 501.700 409.700 511.700 408.700 518.300 406.300 524 402.300 534.300 400.300 537 396.700 536.700 389.700H525.300V384.700L522 383.700 519.300 379.700 520.300 377.300 523 376.300 522.700 370.700 526.700 370.300 527.700 368.300 529.300 370 534.700 369.700 537 371 542 369.700 544 366.700 549 364.300 558.300 365.300 562 370.300 571 369.700 572 371.300H579.300L580.700 372.700 581.300 391.700 587.700 386.300 592.300 387 624.300 277 696 262.700 870 298 925.300 351 903.300 439.300
909 447.300 916.300 450.300 918.700 456.700 921 460.700 917.700 462.700 918.300 474 921 476.700 926 477.300 930.300 480 923.300 488.700 927.300 489.700 930.300 495.700 927.300 506 928.700 511.300 923 513.700 920.700 521.300 926.700 523.300 925.700 526.700 920 527 921.300 535 924 541.700 929 544.300 927.700 556 930.700 560 936.700 562 936.300 574 944.300 573.700 947 580 952.700 581.300 956.300 588.300 954.700 593.300 956.300 598.700 960.300 599.300 959.700 606.700 961.300 613 967.300 613.700 968.300 622.700 972.700 626 973.700 633.300 977.300 634.700 984.300 646.700 986 646 985.300 648.300 989.300 658.300 993.300 665 994.300 673.300 998.300 679.300 996 689
1001.700 694 996.700 699.300 993 701.300 991.700 711.300 994.300 712.300 995.300 723.300 997.700 728.300 994.700 740 989 742.700 991 745.300 987.300 747.700 992.300 754 987.300 755.700V763.300L981.700 767.300 973.700 768 968.700 776.700 962.700 772 961.700 781.300 954.700 782.700 950.700 791.300 943.300 790 941 799 936.700 805 932.700 816 931.700 826.700 929.300 837.700 933 838.700 936.300 842.700 932.700 846.700 933.300 851.700 937 854.300 930.700 863.300 930 872.300 932.700 873.300 933.700 879.300 796.300 891 796.700 886.700 803.300 886 806 882.300 798.300 878.700 804.700 876.700 806.300 874 803 868.300 804.700 864.300 806.700 861.700 808 855.300 801 853.700 798 858 795 857.700 791.700 853.700 786 850.700 788.300 848.300 784.700 845.700 786 835 783 832 788.300 826.700 787.700 822.300 783 819 777.700 816.300 780.300 810.300 775 803.300 773.700 798.300 779.300 791 779 788.700 773.700 788.300 772 785.700 767.300 787.700 764 785 767 774.700 762.300 769V760L757.700 756.700 753.700 755.700 753 762.300 746 766.700 744.700 771 737.700 766.700 730 764 721.700 766 719.300 769.700 713.300 766H709L703.300 762 694 763.300 688.300 761.300 684.700 755.300 687.700 751 681.700 749.700
680 739.300 674.300 737.300 667.300 730 669.700 725.300 675.300 729.300 683.700 727 685.300 719.300 676 712 670 711.300 666.700 708.700 660 707.300 658.300 700.700 647.300 700.300 642.300 702 640 705.300 635.300 708.700 634 713.300 629 708 626.700 710.700 621.700 706.700 616.700 704.300 612 695 604.700 693.300 600.700 685.700 596.700 686.700 593.700 685.700 591 688 587.300 686.300 583 688.300 580 686.300 573.700 685.300 576 675.300H570.700L569.300 673 565.700 673.300 561.300 669 556.700 670.300 553.700 667.700 548 670.700 546 663.300 540.300 658.700 538.700 647.700 534.300 645.300 529 647 523.300 645.300 522.700 639.700 480.700 635.700 466 626 460.700 625 456.700 619.300 450.300 617 451 606.700 454 606 457.300 601 456 596.700 454.300 593.300 458.700 589 456.700 586 458 580 457 572.300 449.300 571 444.700 564 441.700 563.300 438.700 557.700 438 553 435 552 432 554.300 431 548.700 426.700 542.700 428.300 540 425.700 535 426.700 514.700 429.300 512.700V506.700L426 505 424.300 496.700 421.300 494.300 420.300 487.700V441.700H417.300Z"/></svg>
</section>
</main>
</div>
</body>
</html>
```

FILE: styles.css
```css
* { box-sizing: border-box; }
body { margin: 0; font-family: "Open Sans", "Noto Sans", sans-serif; font-size: 12px; color: #000; background: #f0f0f0; }
.defs { position: absolute; width: 0; height: 0; }
.app { display: flex; flex-direction: column; width: 1081px; height: 937px; overflow: hidden; }
i, em, s, q { font-style: normal; }
s { text-decoration: none; }
q::before, q::after { content: none; }
svg { display: block; width: 16px; height: 16px; flex: none; }
span { white-space: nowrap; letter-spacing: -0.25px; }

.titlebar { height: 26px; flex: none; display: flex; align-items: center; background: #fff; padding-bottom: 6px; color: #858585; }
.logo { margin-left: -1px; }
.title { margin-left: 5px; letter-spacing: -0.32px; }
.menubar { height: 20px; flex: none; display: flex; align-items: center; padding-left: 2px; background: #f0f0f0; border-bottom: 1px solid #d2d2d2; color: #8a8a8a; }
.menubar u { text-decoration: underline 1px; text-underline-offset: 1px; text-decoration-skip-ink: none; }
.m52 { width: 52px; } .m35 { width: 35px; } .m40 { width: 40px; } .m43 { width: 43px; }
.m57 { width: 57px; } .m54 { width: 54px; } .m48 { width: 48px; } .m47 { width: 47px; }
.m63 { width: 63px; } .m39 { width: 39px; } .m44 { width: 44px; } .m72 { width: 72px; }

.toolbar { height: 31px; flex: none; display: flex; align-items: center; background: linear-gradient(#f9f9f9, #ededed); border-bottom: 1px solid #b7b7b7; }
.toolbar i, .docktools i { width: 25px; height: 25px; flex: none; display: flex; align-items: center; justify-content: center; }
.toolbar .big { width: 18px; height: 18px; }
.toolbar .pressed { width: 24px; margin-right: 1px; height: 23px; border: 1px solid #a9a9a9; border-radius: 2px; background: #dcdcdc; }
.off svg { opacity: .32; filter: grayscale(1); }
.flip svg { transform: scaleX(-1); }
.grip { width: 18px; height: 17px; flex: none; background: radial-gradient(circle, #b4b4b4 .7px, transparent .9px) 0 0 / 3px 3px; background-clip: content-box; padding: 0 4px 0 9px; }
.grip.edge { width: 5px; padding: 0 4px 0 0; margin-right: .5px; }
.grip.narrow { width: 17px; padding-right: 3px; }
.grip.wide { width: 19px; padding-right: 5px; }
.sep { width: 8px; height: 12px; flex: none; border-left: 1px solid #cfcfcf; margin-left: 4px; margin-right: -4px; }
.drop { width: 15px; height: 15px; flex: none; display: flex; align-items: center; justify-content: center; }
.drop.tight { width: 14px; margin-left: -1px; }
.drop::before { content: ""; border: 5px solid transparent; border-top-color: #555; border-bottom: 0; }
.drop.dim::before { border-top-color: #9a9a9a; }
.versioning { border-bottom: 0; padding-bottom: 1px; }
.vtext { width: 187px; font-size: 10px; letter-spacing: -0.33px; }
.vtext strong { font-size: 11px; letter-spacing: -0.42px; }

.work { flex: 1; display: flex; min-height: 0; }
.docks { width: 341px; flex: none; display: flex; flex-direction: column; overflow: hidden; }
.dockhead { height: 20px; display: flex; align-items: center; gap: 3px; padding-right: 2px; padding-bottom: 2px; }
.dockhead span { flex: 1; }
.dockhead svg { width: 11px; height: 11px; }
.browser-title { margin-left: -6px; }
.layers-title { margin-left: -5px; }
.docktools { display: flex; align-items: center; margin-left: -5.5px; padding-bottom: 2px; }
.browser { height: 557px; flex: none; display: flex; flex-direction: column; }
.browser .docktools { height: 30px; }
.treebox { flex: 1; display: flex; min-height: 0; background: #fff; border: 1px solid #b4b4b4; border-left: 0; }
.tree { flex: 1; overflow: hidden; }
.tree span { letter-spacing: -0.33px; }
.row { height: 22px; display: flex; align-items: center; width: 278px; }
.current { background: #efefef; }
.row > b { width: 18px; flex: none; display: flex; justify-content: center; }
.row > i { width: 24px; margin: 0 4px 0 5px; display: flex; justify-content: center; flex: none; }
.row > span { padding-top: 1px; }
.l0 > b { margin-left: -5px; } .l1 > b { margin-left: 20px; } .l2 > b { margin-left: 45px; } .l3 > b { margin-left: 70px; }
.down::before { content: ""; border: 5px solid transparent; border-top-color: #555; border-bottom: 0; }
.right::before { content: ""; border: 5px solid transparent; border-left-color: #555; border-right: 0; }
.s20 { width: 20px; height: 20px; } .s18 { width: 18px; height: 20px; margin-top: -2px; }
.conn { width: 14px; height: 12px; } .region { width: 20px; height: 15px; margin-top: -4px; } .sheet { width: 18px; height: 20px; }
.orange { color: #a65f0c; } .olive { color: #68644e; }
.scrollbar { width: 17px; display: flex; flex-direction: column; border-left: 1px solid #b4b4b4; background: #fff; }
.sbtn { height: 16px; display: flex; align-items: center; justify-content: center; }
.up { border: 5px solid transparent; border-top: 0; border-bottom-color: #555; }
.dn { border: 5px solid transparent; border-bottom: 0; border-top-color: #555; }
.strack { height: 91px; background: #e5e5e5; border: solid #b9b9b9; border-width: 1px 0; }
.sthumb { height: 246px; background: linear-gradient(90deg, #f6f6f6, #fff); }
.strack.grow { flex: 1; height: auto; }
.hsplit { height: 7px; flex: none; background: radial-gradient(circle, #b0b0b0 .7px, transparent .9px) 0 0 / 3px 3px; background-clip: content-box; padding: 2px 165px 2px 158px; }
.layers { flex: 1; display: flex; flex-direction: column; min-height: 0; }
.layers .dockhead { height: 19px; flex: none; margin-top: 1px; }
.layers .docktools { height: 30px; flex: none; }
.layerlist { flex: 1; background: #fff; border-top: 1px solid #b4b4b4; border-right: 1px solid #b4b4b4; position: relative; }
.lrow { height: 22px; display: flex; align-items: center; }
.lrow > b { width: 18px; margin-left: -5px; flex: none; display: flex; justify-content: center; }
.lrow > em { width: 17px; height: 17px; margin-left: 7px; flex: none; background: #fff; border: 1px solid #b5b5b5; }
.lrow > em svg { width: 15px; height: 15px; }
.lrow > i { width: 18px; margin: 0 7px; flex: none; }
.lrow > span { flex: 1; padding-top: 1px; letter-spacing: -0.38px; }
.lrow > s { width: 4px; height: 18px; background: #dfdfdf; margin-right: 1px; }
.lrow.child { height: 21px; }
.lrow.child > em { margin-left: 45px; }
.lrow.child > i.swatch { width: 19px; height: 19px; margin: 0 6px; border: 1px solid #4c4a3c; }
.gold { background: #e1ae3b; } .pink { background: #e15989; }
.lrow > .hiddenlayer { color: #777; font-style: italic; font-weight: 700; letter-spacing: -0.25px; padding-top: 0; }
.lrow > .shown { font-weight: 700; letter-spacing: -0.5px; padding-top: 0; }
.lrow > q { width: 17px; height: 17px; border: 1px solid #d5d5d5; border-radius: 2px; background: #f5f5f5; color: #444; font-weight: 800; font-size: 13px; line-height: 15px; text-align: center; margin-right: 3px; }
.cursor { position: absolute; left: 4px; top: 54px; width: 13px; height: 20px; }
.vsplit { width: 7px; flex: none; display: flex; align-items: center; padding-left: 3px; padding-top: 78px; }
.vsplit b { width: 3px; height: 18px; background: radial-gradient(circle, #b0b0b0 .7px, transparent .9px) 0 0 / 3px 3px; }
.canvas { flex: 1; border-top: 1px solid #aaa; border-left: 1px solid #aaa; background: #fff; }
.map { width: 732px; height: 797px; }
.map path { fill: #e15989; stroke: #222; stroke-width: 1.200; stroke-linejoin: round; }
```
